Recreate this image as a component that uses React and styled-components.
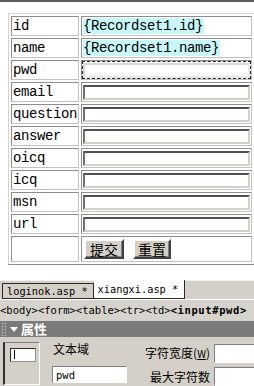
import React from 'react'
import styled, { createGlobalStyle } from 'styled-components'

const GlobalStyle = createGlobalStyle`
html, body {
  margin: 0;
  padding: 0;
  background: #fff;
  overflow: hidden;
}
`

const mono = `"Liberation Mono", "DejaVu Sans Mono", "Noto Sans CJK SC", monospace`
const cjk = `"Noto Sans CJK SC", "Liberation Sans", sans-serif`

const fields = ['email', 'question', 'answer', 'oicq', 'icq', 'msn', 'url']

const App = () => {
  return (
    <Page>
      <GlobalStyle />
      <Canvas>
        <FormTable>
          <colgroup>
            <col style={{ width: 68 }} />
            <col style={{ width: 171 }} />
          </colgroup>
          <tbody>
            <tr>
              <Cell>id</Cell>
              <Cell><Binding>{'{Recordset1.id}'}</Binding></Cell>
            </tr>
            <tr>
              <Cell>name</Cell>
              <Cell><Binding>{'{Recordset1.name}'}</Binding></Cell>
            </tr>
            <tr>
              <Cell>pwd</Cell>
              <Cell>
                <Selected><Field selected /></Selected>
              </Cell>
            </tr>
            {fields.map((f) => (
              <tr key={f}>
                <Cell>{f}</Cell>
                <Cell><Field /></Cell>
              </tr>
            ))}
            <tr>
              <Cell tall />
              <Cell tall>
                <Buttons>
                  <Btn w={40}>提交</Btn>
                  <Btn w={38}>重置</Btn>
                </Buttons>
              </Cell>
            </tr>
          </tbody>
        </FormTable>
      </Canvas>

      <TabStrip>
        <Tab>loginok.asp *</Tab>
        <Tab active>xiangxi.asp *</Tab>
      </TabStrip>

      <TagBar>
        &lt;body&gt;&lt;form&gt;&lt;table&gt;&lt;tr&gt;&lt;td&gt;<CurrentTag>&lt;input#pwd&gt;</CurrentTag>
      </TagBar>

      <PanelHeader>
        <Gripper />
        <Arrow />
        <PanelTitle>属性</PanelTitle>
      </PanelHeader>

      <Props>
        <IconFrame>
          <FieldGlyph><Caret /></FieldGlyph>
        </IconFrame>
        <NameColumn>
          <PropLabel>文本域</PropLabel>
          <PropInput value="pwd" readOnly w={75} />
        </NameColumn>
        <SizeGrid>
          <PropLabel right>字符宽度(<u>W</u>)</PropLabel>
          <PropInput readOnly />
          <PropLabel right>最大字符数</PropLabel>
          <PropInput readOnly />
        </SizeGrid>
      </Props>
    </Page>
  )
}
export default App

const Page = styled.div`
width: 254px;
height: 386px;
display: flex;
flex-direction: column;
overflow: hidden;
background: #fff;
`
const Canvas = styled.div`
flex: 1;
min-height: 0;
border-top: 2px solid #5c5c5c;
padding: 11px 0 0 8px;
overflow: hidden;
`
const FormTable = styled.table`
border-collapse: separate;
border-spacing: 2px;
border: 1px solid;
border-color: #d4d4d4 #8a8a8a #8a8a8a #d4d4d4;
width: 247px;
table-layout: fixed;
`
const Cell = styled.td`
box-sizing: border-box;
height: ${({ tall }) => (tall ? '26px' : '20px')};
padding: 0 1px;
border: 1px solid;
border-color: #8e8e8e #c2c2c2 #c2c2c2 #8e8e8e;
font-family: ${mono};
font-size: 14px;
letter-spacing: -0.4px;
line-height: 18px;
color: #000;
white-space: nowrap;
overflow: hidden;
vertical-align: middle;
`
const Binding = styled.span`
background: #c9f7f7;
padding: 0 1px 0 0;
`
const Field = styled.div`
width: 167px;
height: 15px;
box-sizing: border-box;
background: #fff;
border: 2px solid;
border-color: ${({ selected }) =>
  selected ? '#d8d8d8 #e8e8e8 #e8e8e8 #d8d8d8' : '#505050 #d4d0c8 #d4d0c8 #707070'};
`
const Selected = styled.div`
box-sizing: border-box;
width: 169px;
height: 18px;
margin-left: -1px;
border: 1px dashed #222;
display: flex;
align-items: center;
padding-left: 0;
`
const Buttons = styled.div`
display: flex;
gap: 9px;
padding-left: 1px;
`
const Btn = styled.button`
box-sizing: border-box;
width: ${({ w }) => w}px;
height: 20px;
padding: 0;
background: #d4d0c8;
border: 2px solid;
border-color: #fff #404040 #404040 #fff;
box-shadow: inset -1px -1px 0 #808080;
font-family: ${cjk};
font-size: 14px;
line-height: 14px;
color: #000;
`
const TabStrip = styled.div`
height: 19px;
flex: none;
display: flex;
align-items: flex-start;
background: #d4d0c8;
border-top: 1px solid #efefef;
box-sizing: border-box;
padding-left: 2px;
`
const Tab = styled.div`
box-sizing: border-box;
height: ${({ active }) => (active ? '19px' : '16px')};
margin-top: ${({ active }) => (active ? '-1px' : '2px')};
padding: 0 ${({ active }) => (active ? '6px' : '5px')} 0 4px;
background: ${({ active }) => (active ? '#fff' : '#d4d0c8')};
border: 1px solid #2a2a2a;
border-left: ${({ active }) => (active ? 'none' : '1px solid #2a2a2a')};
border-top: ${({ active }) => (active ? 'none' : '1px solid #2a2a2a')};
font-family: "DejaVu Sans Mono", monospace;
font-size: 10.3px;
line-height: ${({ active }) => (active ? '18px' : '14px')};
color: #000;
white-space: nowrap;
`
const TagBar = styled.div`
height: 22px;
flex: none;
box-sizing: border-box;
background: #d6d3cc;
border-top: 1px solid #fff;
font-family: "DejaVu Sans Mono", monospace;
font-size: 10.5px;
line-height: 20px;
color: #000;
white-space: nowrap;
overflow: hidden;
`
const CurrentTag = styled.b`
letter-spacing: 0.6px;
`
const PanelHeader = styled.div`
height: 16px;
flex: none;
display: flex;
align-items: center;
background: #7a7a7a;
`
const Gripper = styled.span`
width: 5px;
height: 14px;
margin-left: 1px;
background-image: radial-gradient(#b4b4b4 0.8px, transparent 1.1px);
background-size: 3px 3px;
`
const Arrow = styled.span`
width: 0;
height: 0;
margin-left: 4px;
border-left: 4px solid transparent;
border-right: 4px solid transparent;
border-top: 5px solid #fff;
`
const PanelTitle = styled.span`
margin-left: 3px;
font-family: ${cjk};
font-weight: bold;
font-size: 13px;
line-height: 16px;
color: #fff;
`
const Props = styled.div`
height: 49px;
flex: none;
box-sizing: border-box;
display: flex;
align-items: flex-start;
padding: 5px 0 0 3px;
background: #d4d0c8;
overflow: hidden;
`
const IconFrame = styled.div`
box-sizing: border-box;
width: 37px;
height: 43px;
flex: none;
padding: 5px 0 0 5px;
border-top: 1px solid #808080;
border-left: 2px solid #303030;
border-right: 1px solid #fff;
border-bottom: 1px solid #fff;
`
const FieldGlyph = styled.div`
box-sizing: border-box;
width: 26px;
height: 14px;
background: #fff;
border: 1px solid;
border-color: #303030 #909090 #909090 #303030;
padding: 1px 0 0 3px;
`
const Caret = styled.div`
width: 1px;
height: 9px;
background: #000;
`
const NameColumn = styled.div`
width: 75px;
flex: none;
margin-left: 12px;
display: flex;
flex-direction: column;
gap: 10px;
`
const PropLabel = styled.div`
font-family: ${cjk};
font-size: 12px;
line-height: ${({ right }) => (right ? '19px' : '14px')};
color: #000;
padding-left: ${({ right }) => (right ? '0' : '1px')};
text-align: ${({ right }) => (right ? 'right' : 'left')};
white-space: nowrap;

u {
  text-decoration: underline;
  font-size: 10px;
}
`
const PropInput = styled.input`
box-sizing: border-box;
width: ${({ w }) => (w ? `${w}px` : '46px')};
height: ${({ w }) => (w ? '17px' : '19px')};
margin: 0;
padding: 0 0 0 3px;
background: #fff;
border: 1px solid;
border-color: #808080 #fff #fff #808080;
font-family: "DejaVu Sans Mono", monospace;
font-size: 10.5px;
color: #000;
outline: none;
`
const SizeGrid = styled.div`
flex: 1;
margin: 1px -6px 0 0;
display: grid;
grid-template-columns: 1fr 46px;
column-gap: 4px;
row-gap: 4px;
align-items: center;
`
